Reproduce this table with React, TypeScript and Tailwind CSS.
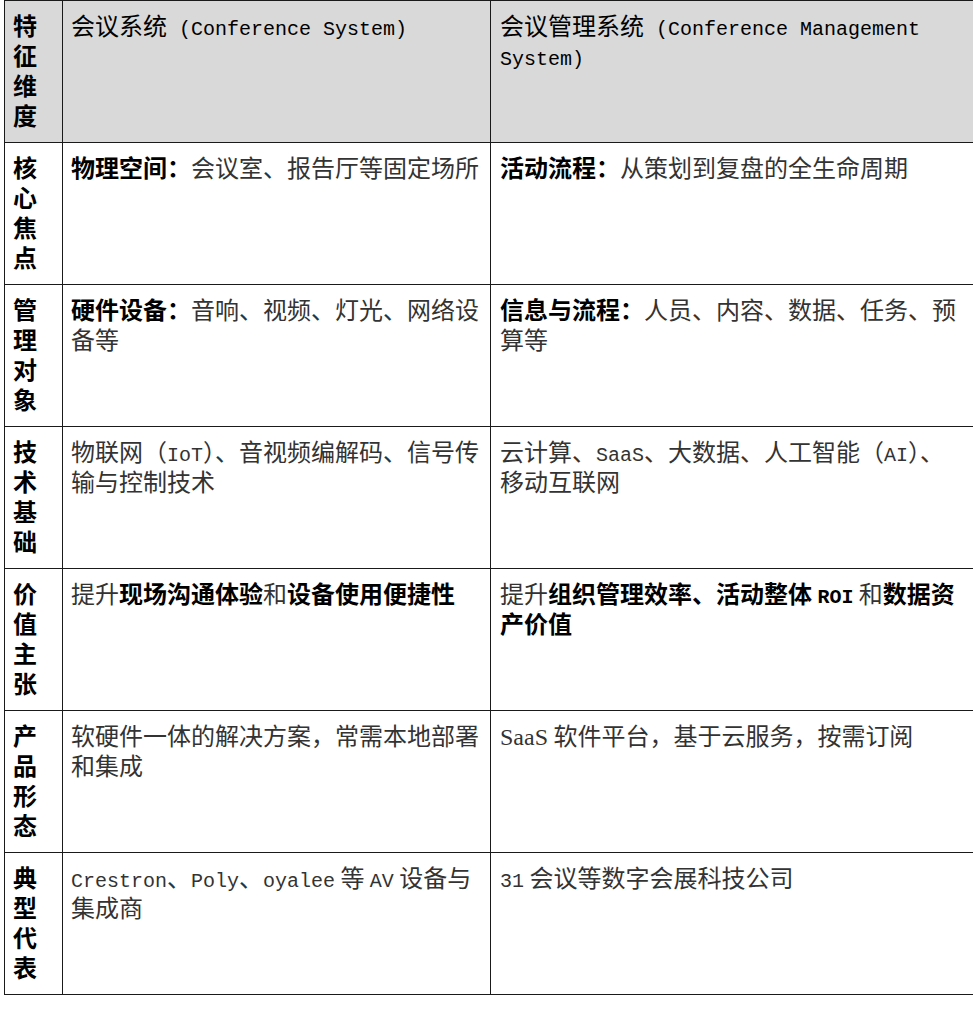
import React from "react";

type Seg = [string, boolean?];

interface Row {
  label: string;
  left: Seg[];
  right: Seg[];
  serifLatinRight?: boolean;
}

const rows: Row[] = [
  {
    label: "核心焦点",
    left: [["物理空间：", true], ["会议室、报告厅等固定场所"]],
    right: [["活动流程：", true], ["从策划到复盘的全生命周期"]],
  },
  {
    label: "管理对象",
    left: [["硬件设备：", true], ["音响、视频、灯光、网络设备等"]],
    right: [["信息与流程：", true], ["人员、内容、数据、任务、预算等"]],
  },
  {
    label: "技术基础",
    left: [["物联网（IoT）、音视频编解码、信号传输与控制技术"]],
    right: [["云计算、SaaS、大数据、人工智能（AI）、移动互联网"]],
  },
  {
    label: "价值主张",
    left: [["提升"], ["现场沟通体验", true], ["和"], ["设备使用便捷性", true]],
    right: [
      ["提升"],
      ["组织管理效率、活动整体 ROI", true],
      [" 和"],
      ["数据资产价值", true],
    ],
  },
  {
    label: "产品形态",
    left: [["软硬件一体的解决方案，常需本地部署和集成"]],
    right: [["SaaS 软件平台，基于云服务，按需订阅"]],
    serifLatinRight: true,
  },
  {
    label: "典型代表",
    left: [["Crestron、Poly、oyalee 等 AV 设备与集成商"]],
    right: [["31 会议等数字会展科技公司"]],
  },
];

// split a string into runs of latin letters/digits and everything else
const Mixed: React.FC<{ text: string; bold?: boolean; serif?: boolean }> = ({
  text,
  bold,
  serif,
}) => {
  const parts = text.split(/([A-Za-z0-9()]+)/).filter((p) => p !== "");
  return (
    <span className={bold ? "font-bold text-black" : ""}>
      {parts.map((p, i) =>
        /^[A-Za-z0-9()]+$/.test(p) ? (
          serif ? (
            <span
              key={i}
              className="font-['Liberation_Serif',serif] text-[24px] leading-[20px]"
            >
              {p}
            </span>
          ) : (
            <span
              key={i}
              className="font-['Liberation_Mono',monospace] text-[20px] leading-[20px]"
            >
              {p}
            </span>
          )
        ) : (
          <span key={i}>{p}</span>
        )
      )}
    </span>
  );
};

const Cell: React.FC<{ segs: Seg[]; serif?: boolean }> = ({ segs, serif }) => (
  <>
    {segs.map(([t, b], i) => (
      <Mixed key={i} text={t} bold={b} serif={serif} />
    ))}
  </>
);

const Mono: React.FC<{ children: React.ReactNode }> = ({ children }) => (
  <span className="font-['Liberation_Mono',monospace] text-[20px] leading-[20px] whitespace-pre-wrap">
    {children}
  </span>
);

export default function App() {
  return (
    <div className="w-full overflow-hidden bg-white font-['Noto_Sans_CJK_SC',sans-serif] text-[24px] leading-[30px] text-[#333]">
      <table className="ml-[4px] w-[971px] table-fixed border-collapse">
        <colgroup>
          <col className="w-[58px]" />
          <col className="w-[428px]" />
          <col className="w-[485px]" />
        </colgroup>
        <thead>
          <tr className="bg-[#d9d9d9] text-black">
            <th className="border border-[#1a1a1a] pl-[8px] pr-[8px] pt-[9px] pb-[12px] text-left align-top font-bold">
              特征维度
            </th>
            <th className="h-[141px] border border-[#1a1a1a] pl-[8px] pr-[8px] pt-[9px] pb-[12px] text-left align-top font-normal">
              会议系统<Mono> (Conference System)</Mono>
            </th>
            <th className="border border-[#1a1a1a] pl-[9px] pr-[8px] pt-[9px] pb-[12px] text-left align-top font-normal">
              会议管理系统<Mono> (Conference Management System)</Mono>
            </th>
          </tr>
        </thead>
        <tbody>
          {rows.map((r) => (
            <tr key={r.label}>
              <td className="border border-[#1a1a1a] pl-[8px] pr-[8px] pt-[9px] pb-[12px] align-top font-bold text-black">
                {r.label}
              </td>
              <td className="border border-[#1a1a1a] pl-[8px] pr-[8px] pt-[9px] pb-[12px] align-top">
                <Cell segs={r.left} />
              </td>
              <td className="border border-[#1a1a1a] pl-[9px] pr-[8px] pt-[9px] pb-[12px] align-top">
                <Cell segs={r.right} serif={r.serifLatinRight} />
              </td>
            </tr>
          ))}
        </tbody>
      </table>
    </div>
  );
}
